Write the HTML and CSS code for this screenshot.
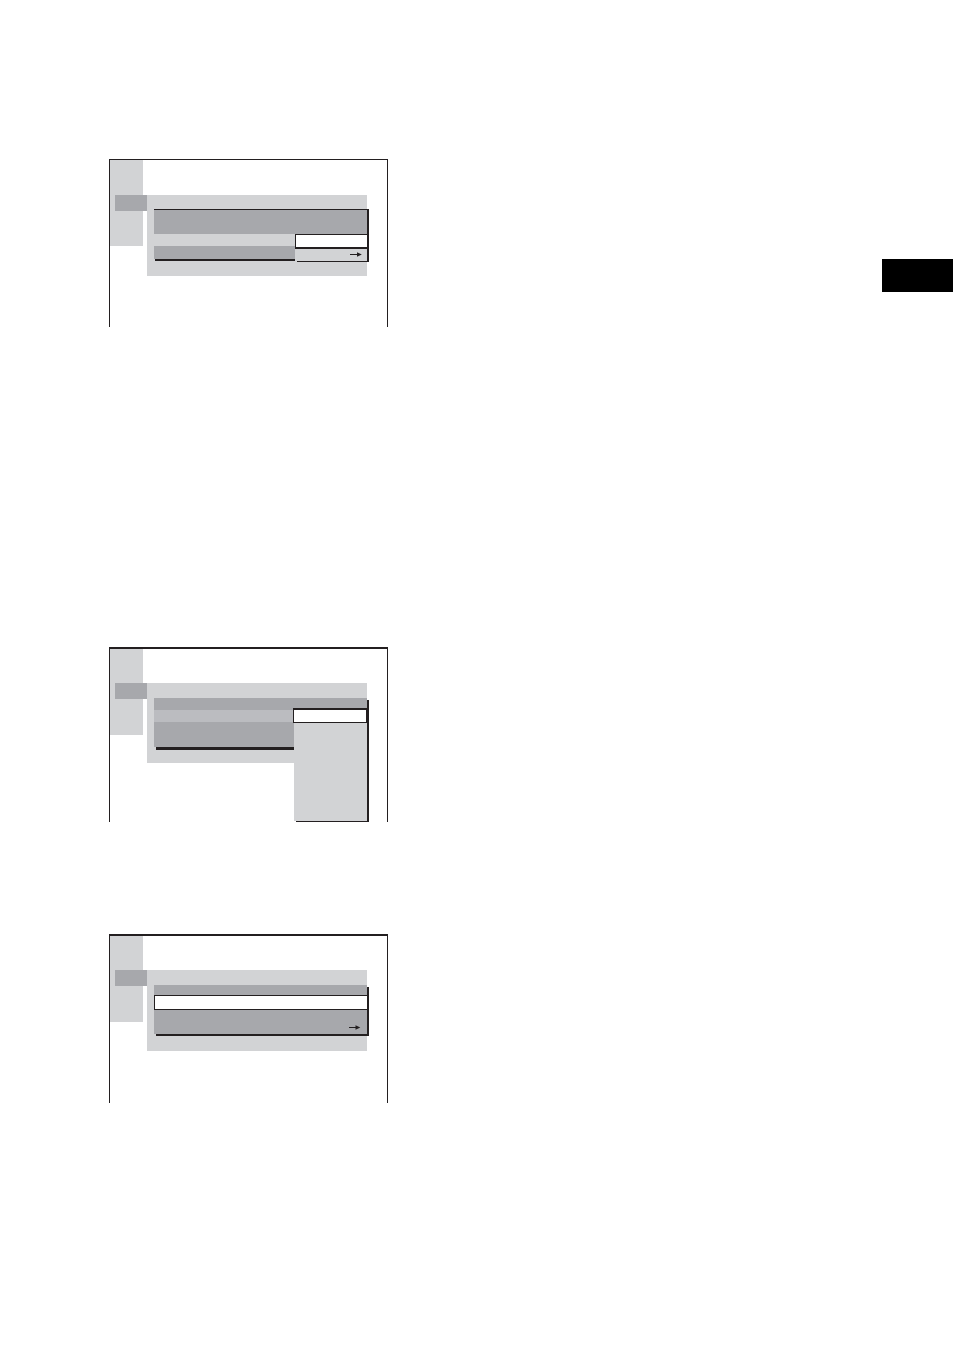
FILE: index.html
```html
<!DOCTYPE html>
<html lang="en">
<head>
<meta charset="utf-8">
<meta name="viewport" content="width=device-width, initial-scale=1.0">
<title>Setup</title>
<link rel="stylesheet" href="styles.css">
</head>
<body>
<div class="page">
  <main class="screens">

    <section class="screen screen-thin">
      <div class="sidebar"><div class="tab"></div></div>
      <div class="panel">
        <ul class="menu menu-lined">
          <li class="row row-double"></li>
          <li class="row row-light"></li>
          <li class="row row-last"></li>
        </ul>
        <ul class="popup popup-short">
          <li class="option option-selected"></li>
          <li class="option option-link">
            <svg class="arrow" viewBox="0 0 12 5"><path d="M0 2.5H8" stroke="#231f20"/><path d="M7 0.3L11.8 2.5L7 4.7Z" fill="#231f20"/></svg>
          </li>
        </ul>
      </div>
    </section>

    <section class="screen screen-list">
      <div class="sidebar"><div class="tab"></div></div>
      <div class="panel">
        <ul class="menu menu-deep">
          <li class="row"></li>
          <li class="row row-mid"></li>
          <li class="row row-rest"></li>
        </ul>
        <ul class="popup popup-long">
          <li class="option option-selected"></li>
          <li class="option option-list"></li>
        </ul>
      </div>
    </section>

    <section class="screen">
      <div class="sidebar"><div class="tab"></div></div>
      <div class="panel">
        <ul class="menu">
          <li class="row row-short"></li>
          <li class="row row-selected"></li>
          <li class="row row-double row-link">
            <svg class="arrow" viewBox="0 0 12 5"><path d="M0 2.5H8" stroke="#231f20"/><path d="M6.5 0.3L11.3 2.5L6.5 4.7Z" fill="#231f20"/></svg>
          </li>
        </ul>
      </div>
    </section>

  </main>
  <div class="page-tab"></div>
</div>
</body>
</html>
```
FILE: styles.css
```css
* {
  box-sizing: border-box;
}
body {
  margin: 0;
  background: #fff;
  font-family: "Liberation Sans", Arial, sans-serif;
}
ul {
  margin: 0;
  padding: 0;
  list-style: none;
}
.page {
  display: grid;
  grid-template-columns: 279fr 494fr 71px;
  align-items: start;
  min-height: 100vh;
  padding: 159px 1px 100px 109px;
}
.page-tab {
  grid-column: 3;
  height: 33px;
  margin-top: 100px;
  background: #000;
}

/* screens */
.screen {
  display: flex;
  align-items: flex-start;
  gap: 4px;
  min-height: 169px;
  padding-right: 20px;
  border: 1px solid #231f20;
  border-top-width: 2px;
  border-bottom: 0;
}
.screen-thin {
  min-height: 168px;
  border-top-width: 1px;
}
.screen-list {
  min-height: 175px;
  margin: 320px 0 112px;
}
.sidebar {
  flex: none;
  position: relative;
  width: 33px;
  height: 86px;
  background: #d2d3d5;
}
.tab {
  position: absolute;
  top: 34px;
  left: 5px;
  width: 32px;
  height: 16px;
  background: #a7a8ac;
}
.panel {
  flex: 1;
  position: relative;
  margin-top: 34px;
  padding: 15px 0 17px 7px;
  background: #d2d3d5;
}
.screen-thin .tab {
  top: 35px;
}
.screen-thin .panel {
  margin-top: 35px;
  padding-top: 14px;
}
.screen-list .panel {
  padding-bottom: 16px;
}

/* menu rows */
.menu {
  box-shadow: 2px 2px 0 #231f20;
}
.menu-lined {
  border-top: 1px solid #231f20;
  box-shadow: 2px 0 0 #231f20, 1px 2px 0 #231f20;
}
.menu-deep {
  box-shadow: 2px 2px 0 #231f20, 2px 3px 0 #231f20;
}
.row {
  height: 12px;
  background: #a7a8ac;
}
.row-double {
  height: 24px;
}
.row-light {
  background: #d2d3d5;
}
.row-mid {
  background: #bbbcc0;
}
.row-last {
  height: 13px;
}
.row-rest {
  height: 25px;
}
.row-short {
  height: 10px;
}
.row-selected {
  height: 15px;
  background: #fff;
  border: 1px solid #231f20;
  border-right: 0;
}
.row-link {
  display: flex;
  justify-content: flex-end;
  align-items: flex-end;
  padding: 0 6px 4px 0;
}

/* popup over the menu */
.popup {
  position: absolute;
  right: 0;
  background: #d2d3d5;
  box-shadow: 2px 1px 0 #231f20;
}
.popup-short {
  top: 39px;
  width: 72px;
}
.popup-long {
  top: 25px;
  width: 73px;
}
.option {
  height: 12px;
}
.option-link {
  display: flex;
  justify-content: flex-end;
  align-items: flex-start;
  padding: 3px 5px 0 0;
}
.option-selected {
  height: 15px;
  background: #fff;
  border: 1px solid #231f20;
}
.popup-short .option-selected {
  border-right: 0;
  border-bottom-width: 2px;
}
.popup-long .option-selected {
  margin-left: -1px;
  border-top-width: 2px;
}
.option-list {
  height: 98px;
}
.arrow {
  display: block;
  width: 12px;
  height: 5px;
}
```
